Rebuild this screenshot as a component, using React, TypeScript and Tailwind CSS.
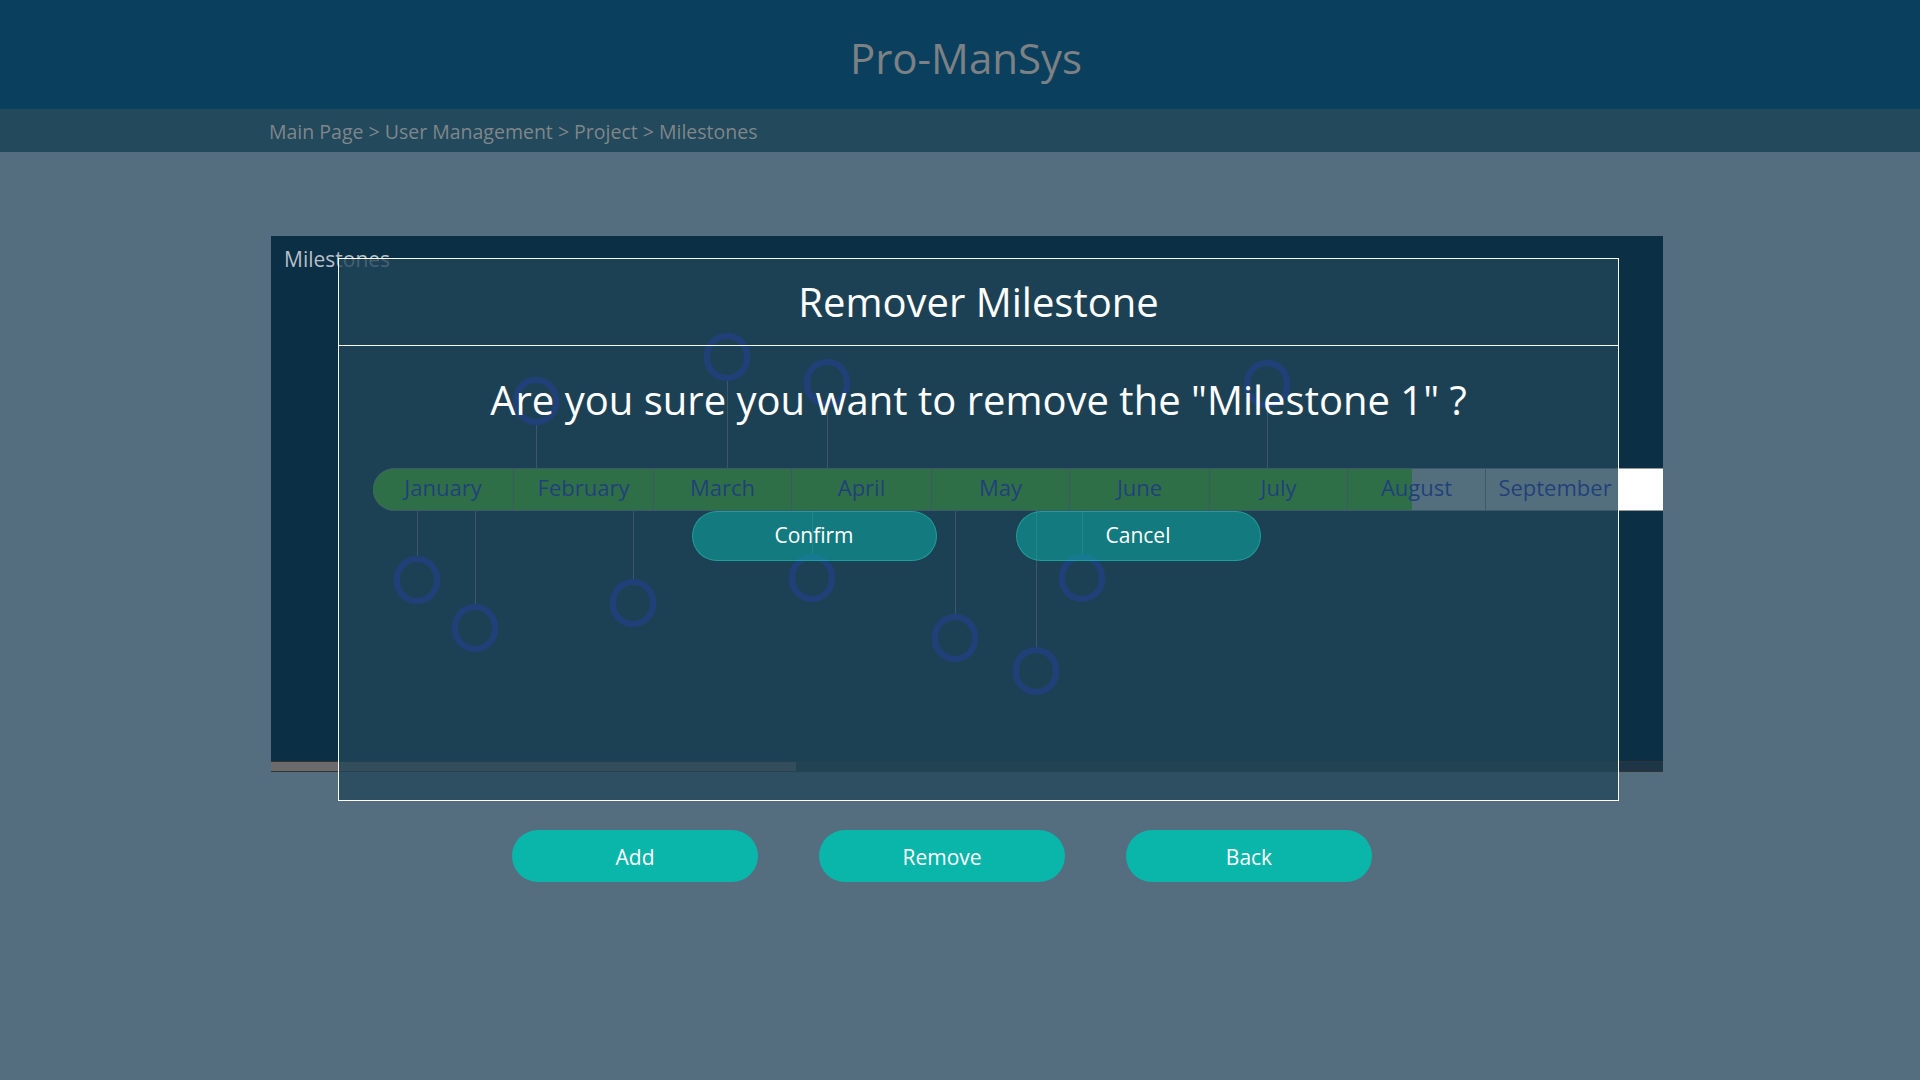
import React from 'react';

// milestone pins on the timeline canvas (canvas-relative centre coords)
const pins = [
  { x: 145.5, cy: 296, up: false },
  { x: 203.5, cy: 344, up: false },
  { x: 362, cy: 319, up: false },
  { x: 541, cy: 293.5, up: false },
  { x: 684, cy: 354, up: false },
  { x: 764.7, cy: 386.5, up: false },
  { x: 811.4, cy: 293.5, up: false },
  { x: 265, cy: 117, up: true },
  { x: 455.7, cy: 73, up: true },
  { x: 556, cy: 99, up: true },
  { x: 996, cy: 100, up: true },
];

const months = ['January', 'February', 'March', 'April', 'May', 'June', 'July', 'August', 'September'];

const BAR_TOP = 184;
const BAR_BOTTOM = 227;
const R = 24;

function Pin({ x, cy, up }: { x: number; cy: number; up: boolean }) {
  const lineTop = up ? cy + R : BAR_BOTTOM;
  const lineBottom = up ? BAR_TOP : cy - R;
  return (
    <>
      <div
        className="absolute w-px bg-[#8c98b0]"
        style={{ left: x, top: lineTop, height: lineBottom - lineTop }}
      />
      <div
        className="absolute w-[46px] h-[48px] rounded-full border-[6px] border-[#1a2bef]"
        style={{ left: x - 23, top: cy - R }}
      />
    </>
  );
}

function Timeline() {
  return (
    <div className="relative flex-1 overflow-hidden">
      {pins.map((p, i) => (
        <Pin key={i} {...p} />
      ))}
      <div className="relative ml-[102px] mt-[184px] h-[43px] w-[1290px] bg-white rounded-l-full border-y border-[#999] overflow-hidden">
        <div className="absolute left-0 top-0 bottom-0 w-[1039px] bg-[#5afc0c]" />
        <div className="relative grid h-full grid-cols-[140px_140px_138px_140px_138px_140px_138px_138px_139px]">
          {months.map((m, i) => (
            <div
              key={m}
              className={`flex items-center justify-center pb-[4px] text-[22px] text-[#1a2bef] ${
                i > 0 ? 'border-l border-[#999]' : ''
              }`}
            >
              {m}
            </div>
          ))}
        </div>
      </div>
    </div>
  );
}

function RemoveDialog() {
  return (
    <div className="absolute left-[67px] top-[22px] w-[1281px] h-[543px] border border-white bg-[#234659c7] flex flex-col">
      <div className="h-[87px] border-b border-white flex items-center justify-center text-white text-[40px]">
        Remover Milestone
      </div>
      <div className="flex flex-col items-center">
        <p className="mt-[30px] text-white text-[40px] leading-[48px]">
          Are you sure you want to remove the "Milestone 1" ?
        </p>
        <div className="mt-[87px] mr-[5px] flex gap-[79px]">
          <button className="w-[245px] h-[50px] rounded-full bg-[#0ab5a9]/50 border border-[#2bc4b6]/50 text-white text-[21px]">
            Confirm
          </button>
          <button className="w-[245px] h-[50px] rounded-full bg-[#0ab5a9]/50 border border-[#2bc4b6]/50 text-white text-[21px]">
            Cancel
          </button>
        </div>
      </div>
    </div>
  );
}

export default function App() {
  return (
    <div className="min-h-[1080px] bg-[#546e80] font-['Open_Sans',sans-serif]">
      <header className="h-[109px] bg-[#0a405d] flex items-center justify-center">
        <h1 className="text-[42px] text-[#7d8084] pt-[6px] pl-[12px]">Pro-ManSys</h1>
      </header>
      <nav className="h-[43px] bg-[#22495c] flex items-center pl-[269px] pt-[2px] text-[19.5px] text-[#80868a]">
        Main Page &gt; User Management &gt; Project &gt; Milestones
      </nav>

      <main>
        <section className="relative ml-[271px] mt-[84px] w-[1392px] h-[536px] bg-[#0b3046] flex flex-col">
          <div className="h-[48px] pl-[13px] pt-[11px] text-[21px] leading-[24px] text-[#b8bfc6]">Milestones</div>
          <Timeline />
          <div className="h-[11px] bg-[#1d3647] border-y border-[#333]">
            <div className="w-[526px] h-full bg-[#6b6b6b] border-r border-[#333]" />
          </div>
          <RemoveDialog />
        </section>

        <div className="mt-[58px] ml-[512px] flex gap-[61px]">
          {['Add', 'Remove', 'Back'].map((b) => (
            <button key={b} className="w-[246px] h-[52px] pt-[3px] rounded-full bg-[#0ab5a9] text-white text-[21px]">
              {b}
            </button>
          ))}
        </div>
      </main>
    </div>
  );
}
